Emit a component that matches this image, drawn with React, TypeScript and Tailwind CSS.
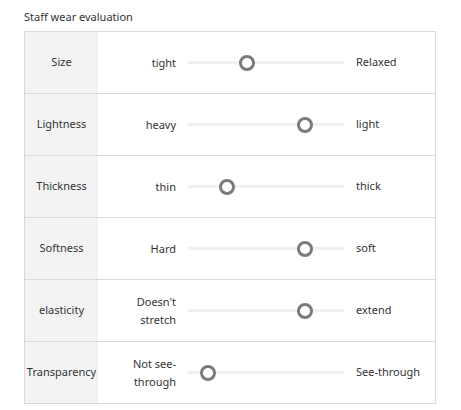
import React from 'react';

type Row = { label: string; left: string; right: string; pos: number };

const rows: Row[] = [
  { label: 'Size', left: 'tight', right: 'Relaxed', pos: 59 },
  { label: 'Lightness', left: 'heavy', right: 'light', pos: 117 },
  { label: 'Thickness', left: 'thin', right: 'thick', pos: 39 },
  { label: 'Softness', left: 'Hard', right: 'soft', pos: 117 },
  { label: 'elasticity', left: "Doesn't stretch", right: 'extend', pos: 117 },
  { label: 'Transparency', left: 'Not see-through', right: 'See-through', pos: 20 },
];

const Track: React.FC<{ pos: number }> = ({ pos }) => (
  <div className="relative w-[156px] h-[3px] bg-[#f0f0f0]">
    <div
      className="absolute top-1/2 w-[16px] h-[16px] -mt-[8px] -ml-[8px] rounded-full border-[3px] border-[#7b7b7b] bg-white"
      style={{ left: pos }}
    />
  </div>
);

export default function App() {
  return (
    <div className="bg-white min-h-screen pl-[24px] pt-[9px] text-[#333] text-[11px]" style={{ fontFamily: '"Noto Sans", Arial, sans-serif' }}>
      <div className="h-[22px] leading-[16px] text-[11px] text-[#333]">Staff wear evaluation</div>
      <div className="w-[412px] border border-[#d9d9d9]">
        {rows.map((r, i) => (
          <div key={r.label} className={`flex h-[61px] box-content items-stretch ${i > 0 ? 'border-t border-[#d9d9d9]' : ''}`}>
            <div className="w-[73px] bg-[#f3f3f3] flex items-center justify-center text-center">{r.label}</div>
            <div className="w-[90px] pl-[30px] pr-[12px] flex items-center justify-end text-right leading-[18px]">{r.left}</div>
            <div className="flex items-center">
              <Track pos={r.pos} />
            </div>
            <div className="pl-[12px] flex items-center">{r.right}</div>
          </div>
        ))}
      </div>
    </div>
  );
}
